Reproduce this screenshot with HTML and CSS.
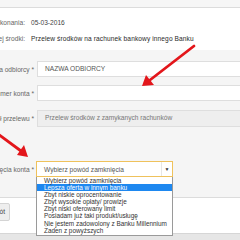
FILE: index.html
```html
<!DOCTYPE html>
<html lang="pl">
<head>
<meta charset="utf-8">
<link rel="stylesheet" href="styles.css">
</head>
<body>
<div class="page">
  <div class="topbar"></div>
  <section class="summary">
    <div class="srow"><div class="slabel"><span>Data wykonania:</span></div><div class="sval">05-03-2016</div></div>
    <div class="srow"><div class="slabel"><span>Przelej środki:</span></div><div class="sval strong">Przelew środków na rachunek bankowy innego Banku</div></div>
  </section>
  <section class="form">
    <div class="frow"><div class="flabel"><span>Nazwa odbiorcy *</span></div><div class="input">NAZWA ODBIORCY</div></div>
    <div class="frow"><div class="flabel"><span>Numer konta *</span></div><div class="input"></div></div>
    <div class="frow"><div class="flabel"><span>Tytuł przelewu *</span></div><div class="input disabled">Przelew środków z zamykanych rachunków</div></div>
    <div class="frow select-row"><div class="flabel"><span>Powód zamknięcia konta *</span></div>
      <div class="select"><span class="sel-text">Wybierz powód zamknięcia</span><span class="sel-arrow">▼</span></div>
    </div>
  </section>
  <section class="footer">
    <div class="btn-wrap"><div class="btn">Powrót</div></div>
  </section>
  <div class="bottombar"></div>

  <ul class="options">
    <li>Wybierz powód zamknięcia</li>
    <li class="active">Lepsza oferta w innym banku</li>
    <li>Zbyt niskie oprocentowanie</li>
    <li>Zbyt wysokie opłaty/ prowizje</li>
    <li>Zbyt niski oferowany limit</li>
    <li>Posiadam już taki produkt/usługę</li>
    <li>Nie jestem zadowolony z Banku Millennium</li>
    <li>Żaden z powyższych</li>
  </ul>

  <svg class="arrows" width="240" height="240" viewBox="0 0 240 240">
    <g stroke="#e3161b" stroke-width="2.8" stroke-linecap="round" fill="none">
      <line x1="194" y1="46" x2="150" y2="80"/>
      <line x1="-2" y1="134" x2="21" y2="151"/>
    </g>
    <g fill="#e3161b">
      <polygon points="142,86 146,75 154,85"/>
      <polygon points="28,157 17,155 24,145"/>
    </g>
  </svg>
</div>
</body>
</html>
```
FILE: styles.css
```css
* { box-sizing: border-box; margin: 0; padding: 0; }
html, body { width: 240px; height: 240px; overflow: hidden; }
body { font-family: "Liberation Sans", Arial, sans-serif; font-size: 6.6px; color: #555; background: #fff; }
.page { position: relative; width: 240px; height: 240px; overflow: hidden; display: flex; flex-direction: column; }

.topbar { height: 8px; background: #f6f6f6; border-bottom: 1px solid #dcdcdc; flex: none; }

.summary { padding: 6px 0 4px; display: flex; flex-direction: column; flex: none; }
.srow { display: grid; grid-template-columns: 25px 1fr; column-gap: 6px; height: 16px; align-items: center; white-space: nowrap; }
.slabel { display: flex; justify-content: flex-end; color: #666; }
.sval { color: #444; }
.sval.strong { color: #2a2a2a; letter-spacing: 0.1px; }

.form { background: #f5f5f5; padding: 11px 0 20px; display: flex; flex-direction: column; gap: 8px; flex: none; height: 147px; }
.frow { display: grid; grid-template-columns: 34px 1fr; column-gap: 3px; align-items: center; white-space: nowrap; }
.flabel { display: flex; justify-content: flex-end; color: #666; }
.input { height: 16px; background: #fff; border: 1px solid #dedede; border-right: none; padding-left: 7px; line-height: 14px; color: #555; }
.input.disabled { background: #eeeeee; color: #777; height: 17px; }
.frow:nth-child(3) { margin-top: 1px; }
.select-row { margin-top: 26px; grid-template-columns: 34px 137px; column-gap: 2px; }
.select { height: 16px; border: 1px solid #efc25c; background: #fff; display: flex; align-items: center; padding-left: 7px; position: relative; }
.sel-text { flex: 1; color: #555; }
.sel-arrow { width: 11px; height: 14px; border-left: 1px solid #e6e6e6; display: flex; align-items: center; justify-content: center; font-size: 5px; color: #333; }

.footer { height: 36px; background: #fff; border-top: 1px solid #dcdcdc; padding-top: 5px; flex: none; }
.btn-wrap { width: 10px; display: flex; justify-content: flex-end; }
.btn { height: 18px; padding: 0 4px; background: #eeeeee; border: 1px solid #d4d4d4; border-radius: 2px; line-height: 16px; color: #444; white-space: nowrap; }

.bottombar { flex: 1; background: #e6e6e6; border-top: 1px solid #d6d6d6; }

.options { position: absolute; left: 36px; top: 177px; width: 137px; list-style: none; background: #fff; border: 1px solid #9a9a9a; border-top: none; font-size: 6.4px; color: #333; padding-bottom: 1px; }
.options li { height: 7.1px; line-height: 7.1px; padding-left: 7px; white-space: nowrap; }
.options li.active { background: #1e88f0; color: #fff; }

.arrows { position: absolute; left: 0; top: 0; pointer-events: none; }
```
